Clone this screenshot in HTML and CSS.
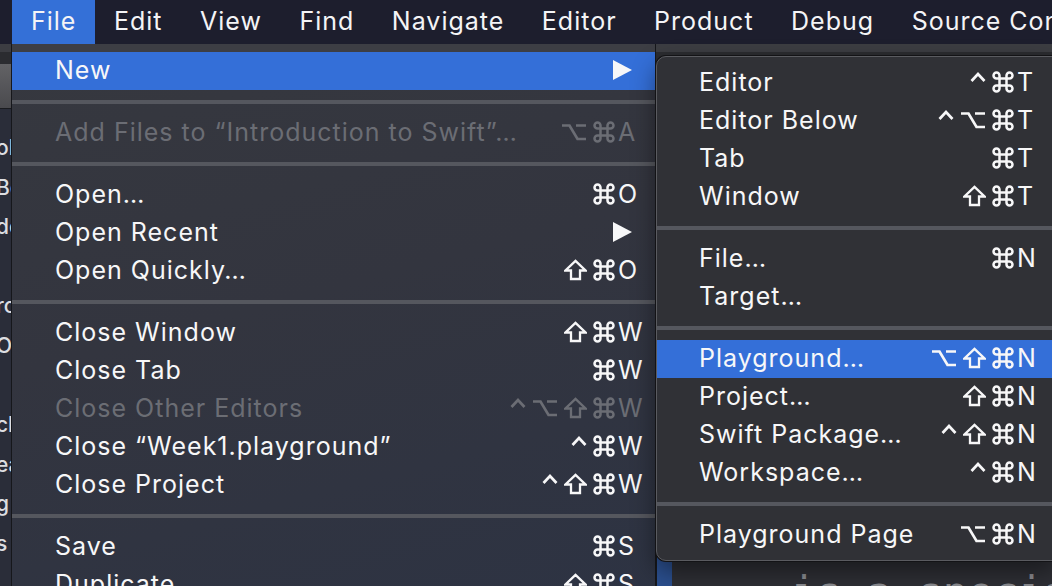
FILE: index.html
```html
<!DOCTYPE html>
<html lang="en">
<head>
<meta charset="utf-8">
<title>Xcode File menu</title>
<link rel="stylesheet" href="styles.css">
</head>
<body>
<svg class="defs" xmlns="http://www.w3.org/2000/svg">
  <symbol id="cmd" viewBox="0 0 22 22"><path d="M7.5 7.5V4.5a3 3 0 1 0-3 3h3M14.5 7.5V4.5a3 3 0 1 1 3 3h-3M7.5 14.5v3a3 3 0 1 1-3-3h3M14.5 14.5v3a3 3 0 1 0 3-3h-3M7.5 7.5h7v7h-7z" fill="none" stroke="currentColor" stroke-width="2.5"/></symbol>
  <symbol id="opt" viewBox="0 0 26 22"><path d="M1 4.5H8.5L16.5 18H25M15 4.5H25" fill="none" stroke="currentColor" stroke-width="2.7"/></symbol>
  <symbol id="shift" viewBox="0 0 23 22"><polygon points="11.5,1.8 21.5,11.5 16,11.5 16,20 7,20 7,11.5 1.5,11.5" fill="none" stroke="currentColor" stroke-width="2.3"/></symbol>
  <symbol id="ctrl" viewBox="0 0 16 22"><path d="M1.5 10L8 3L14.5 10" fill="none" stroke="currentColor" stroke-width="2.7"/></symbol>
  <symbol id="arrow" viewBox="0 0 19 20"><polygon points="0,0 19,10 0,20" fill="currentColor"/></symbol>
</svg>
<div class="screen">
  <nav class="menubar">
    <span class="mb-item active">File</span>
    <span class="mb-item">Edit</span>
    <span class="mb-item">View</span>
    <span class="mb-item">Find</span>
    <span class="mb-item">Navigate</span>
    <span class="mb-item">Editor</span>
    <span class="mb-item">Product</span>
    <span class="mb-item">Debug</span>
    <span class="mb-item">Source Control</span>
  </nav>

  <div class="window">
    <div class="toolbar"><div class="tb-btn"></div></div>
    <div class="content">
      <div class="sidebar">
        <div class="side-line">ok</div>
        <div class="side-line">Bo</div>
        <div class="side-line">de</div>
        <div class="side-line"></div>
        <div class="side-line">rc</div>
        <div class="side-line">O</div>
        <div class="side-line"></div>
        <div class="side-line">ch</div>
        <div class="side-line">ea</div>
        <div class="side-line">g</div>
        <div class="side-line">s</div>
      </div>
      <div class="divider"></div>
      <div class="gutter"></div>
      <div class="editor"><div class="code">is a special</div></div>
    </div>
  </div>

  <div class="menu file-menu">
    <div class="row active"><span class="label">New</span><span class="sc"><span class="key"><svg class="arrow"><use href="#arrow"/></svg></span></span></div>
    <div class="sep"></div>
    <div class="row disabled"><span class="label">Add Files to “Introduction to Swift”…</span><span class="sc"><span class="mods"><svg class="m-opt"><use href="#opt"/></svg><svg class="m-cmd"><use href="#cmd"/></svg></span><span class="key">A</span></span></div>
    <div class="sep"></div>
    <div class="row"><span class="label">Open…</span><span class="sc"><span class="mods"><svg class="m-cmd"><use href="#cmd"/></svg></span><span class="key">O</span></span></div>
    <div class="row"><span class="label">Open Recent</span><span class="sc"><span class="key"><svg class="arrow"><use href="#arrow"/></svg></span></span></div>
    <div class="row"><span class="label">Open Quickly…</span><span class="sc"><span class="mods"><svg class="m-shift"><use href="#shift"/></svg><svg class="m-cmd"><use href="#cmd"/></svg></span><span class="key">O</span></span></div>
    <div class="sep"></div>
    <div class="row"><span class="label">Close Window</span><span class="sc"><span class="mods"><svg class="m-shift"><use href="#shift"/></svg><svg class="m-cmd"><use href="#cmd"/></svg></span><span class="key">W</span></span></div>
    <div class="row"><span class="label">Close Tab</span><span class="sc"><span class="mods"><svg class="m-cmd"><use href="#cmd"/></svg></span><span class="key">W</span></span></div>
    <div class="row disabled"><span class="label">Close Other Editors</span><span class="sc"><span class="mods"><svg class="m-ctrl"><use href="#ctrl"/></svg><svg class="m-opt"><use href="#opt"/></svg><svg class="m-shift"><use href="#shift"/></svg><svg class="m-cmd"><use href="#cmd"/></svg></span><span class="key">W</span></span></div>
    <div class="row"><span class="label">Close “Week1.playground”</span><span class="sc"><span class="mods"><svg class="m-ctrl"><use href="#ctrl"/></svg><svg class="m-cmd"><use href="#cmd"/></svg></span><span class="key">W</span></span></div>
    <div class="row"><span class="label">Close Project</span><span class="sc"><span class="mods"><svg class="m-ctrl"><use href="#ctrl"/></svg><svg class="m-shift"><use href="#shift"/></svg><svg class="m-cmd"><use href="#cmd"/></svg></span><span class="key">W</span></span></div>
    <div class="sep"></div>
    <div class="row"><span class="label">Save</span><span class="sc"><span class="mods"><svg class="m-cmd"><use href="#cmd"/></svg></span><span class="key">S</span></span></div>
    <div class="row"><span class="label">Duplicate…</span><span class="sc"><span class="mods"><svg class="m-shift"><use href="#shift"/></svg><svg class="m-cmd"><use href="#cmd"/></svg></span><span class="key">S</span></span></div>
  </div>

  <div class="menu submenu">
    <div class="row"><span class="label">Editor</span><span class="sc"><span class="mods"><svg class="m-ctrl"><use href="#ctrl"/></svg><svg class="m-cmd"><use href="#cmd"/></svg></span><span class="key">T</span></span></div>
    <div class="row"><span class="label">Editor Below</span><span class="sc"><span class="mods"><svg class="m-ctrl"><use href="#ctrl"/></svg><svg class="m-opt"><use href="#opt"/></svg><svg class="m-cmd"><use href="#cmd"/></svg></span><span class="key">T</span></span></div>
    <div class="row"><span class="label">Tab</span><span class="sc"><span class="mods"><svg class="m-cmd"><use href="#cmd"/></svg></span><span class="key">T</span></span></div>
    <div class="row"><span class="label">Window</span><span class="sc"><span class="mods"><svg class="m-shift"><use href="#shift"/></svg><svg class="m-cmd"><use href="#cmd"/></svg></span><span class="key">T</span></span></div>
    <div class="sep"></div>
    <div class="row"><span class="label">File…</span><span class="sc"><span class="mods"><svg class="m-cmd"><use href="#cmd"/></svg></span><span class="key">N</span></span></div>
    <div class="row"><span class="label">Target…</span></div>
    <div class="sep"></div>
    <div class="row active"><span class="label">Playground…</span><span class="sc"><span class="mods"><svg class="m-opt"><use href="#opt"/></svg><svg class="m-shift"><use href="#shift"/></svg><svg class="m-cmd"><use href="#cmd"/></svg></span><span class="key">N</span></span></div>
    <div class="row"><span class="label">Project…</span><span class="sc"><span class="mods"><svg class="m-shift"><use href="#shift"/></svg><svg class="m-cmd"><use href="#cmd"/></svg></span><span class="key">N</span></span></div>
    <div class="row"><span class="label">Swift Package…</span><span class="sc"><span class="mods"><svg class="m-ctrl"><use href="#ctrl"/></svg><svg class="m-shift"><use href="#shift"/></svg><svg class="m-cmd"><use href="#cmd"/></svg></span><span class="key">N</span></span></div>
    <div class="row"><span class="label">Workspace…</span><span class="sc"><span class="mods"><svg class="m-ctrl"><use href="#ctrl"/></svg><svg class="m-cmd"><use href="#cmd"/></svg></span><span class="key">N</span></span></div>
    <div class="sep"></div>
    <div class="row"><span class="label">Playground Page</span><span class="sc"><span class="mods"><svg class="m-opt"><use href="#opt"/></svg><svg class="m-cmd"><use href="#cmd"/></svg></span><span class="key">N</span></span></div>
  </div>
</div>
</body>
</html>
```

FILE: styles.css
```css
* { box-sizing: border-box; margin: 0; padding: 0; }

html, body {
  width: 1052px;
  height: 586px;
  overflow: hidden;
}

body {
  background: #2a2c33;
  font-family: Inter, "Noto Sans", "DejaVu Sans", sans-serif;
  color: #f7f7f8;
  -webkit-font-smoothing: antialiased;
}

.defs {
  position: absolute;
  width: 0;
  height: 0;
  overflow: hidden;
}

.screen {
  position: relative;
  width: 1052px;
  height: 586px;
  overflow: hidden;
}

/* ---------- menu bar ---------- */
.menubar {
  display: flex;
  height: 44px;
  padding-left: 12px;
  background: #1d1e2d;
  font-size: 25px;
  letter-spacing: 1px;
  white-space: nowrap;
}

.mb-item {
  padding: 0 18.5px 0 19px;
  line-height: 43px;
  color: #f4f4f6;
}

.mb-item.active {
  background: #3470d7;
}

/* ---------- background window ---------- */
.window {
  display: flex;
  flex-direction: column;
  height: 542px;
}

.toolbar {
  height: 72px;
  background: #2b2c30;
  border-top: 8px solid #3c3d42;
  border-bottom: 1px solid #1a1b1f;
  padding-top: 12px;
}

.tb-btn {
  width: 40px;
  height: 44px;
  margin-left: -22px;
  border-radius: 6px;
  background: linear-gradient(#626265, #4a4a4e);
}

.content {
  flex: 1;
  display: flex;
}

.sidebar {
  width: 655px;
  padding-top: 19px;
  background: #2a2d39;
  overflow: hidden;
}

.side-line {
  height: 39.6px;
  line-height: 39.6px;
  font-size: 21px;
  font-weight: 500;
  color: #dcdde1;
  text-indent: -4px;
  white-space: nowrap;
}

.divider {
  width: 2px;
  background: #17181c;
}

.gutter {
  width: 15px;
  background: #2b4f8e;
}

.editor {
  flex: 1;
  background: #2e2f35;
  padding: 459px 0 0 119px;
  overflow: hidden;
}

.code {
  font-family: "DejaVu Sans Mono", monospace;
  font-size: 42px;
  line-height: 50px;
  color: #8c8d92;
  white-space: nowrap;
}

/* ---------- menus ---------- */
.menu {
  position: absolute;
  font-size: 25px;
  letter-spacing: 1px;
  white-space: nowrap;
}

.file-menu {
  left: 11px;
  top: 44px;
  width: 645px;
  height: 560px;
  padding-top: 8px;
  border-left: 1px solid #16171b;
  border-right: 1px solid #16171b;
  background: linear-gradient(165deg, #36383f 0%, #33353f 45%, #2d3343 100%);
  box-shadow: inset 0 8px 0 #3d3e44;
}

.submenu {
  left: 656px;
  top: 56px;
  width: 399px;
  height: 505px;
  padding: 7px 0 6px;
  background: #303136;
  border: 1px solid #5a5b60;
  border-radius: 10px 0 0 10px;
  box-shadow: 0 0 0 1px #131316, 0 10px 24px rgba(0, 0, 0, 0.45);
  overflow: hidden;
}

.row {
  display: flex;
  align-items: center;
  height: 38px;
  padding: 0 0 2px 43px;
}

.submenu .row {
  padding-left: 42px;
}

.row .label {
  flex: 1;
}

.row.active {
  background: #346fd8;
}

.row.disabled {
  color: #6b6d74;
}

.sep {
  height: 4px;
  margin: 10px 0;
  background: #55575e;
}

.sc {
  display: flex;
  align-items: center;
}

.mods {
  display: flex;
  align-items: center;
  gap: 6px;
  margin-right: 3px;
}

.mods svg {
  height: 22px;
}

.m-cmd { width: 22px; }
.m-opt { width: 26px; }
.m-shift { width: 23px; }
.m-ctrl { width: 16px; }

.key {
  display: flex;
  align-items: center;
  width: 37px;
}

.arrow {
  width: 19px;
  height: 20px;
  margin-left: -5px;
}
```
